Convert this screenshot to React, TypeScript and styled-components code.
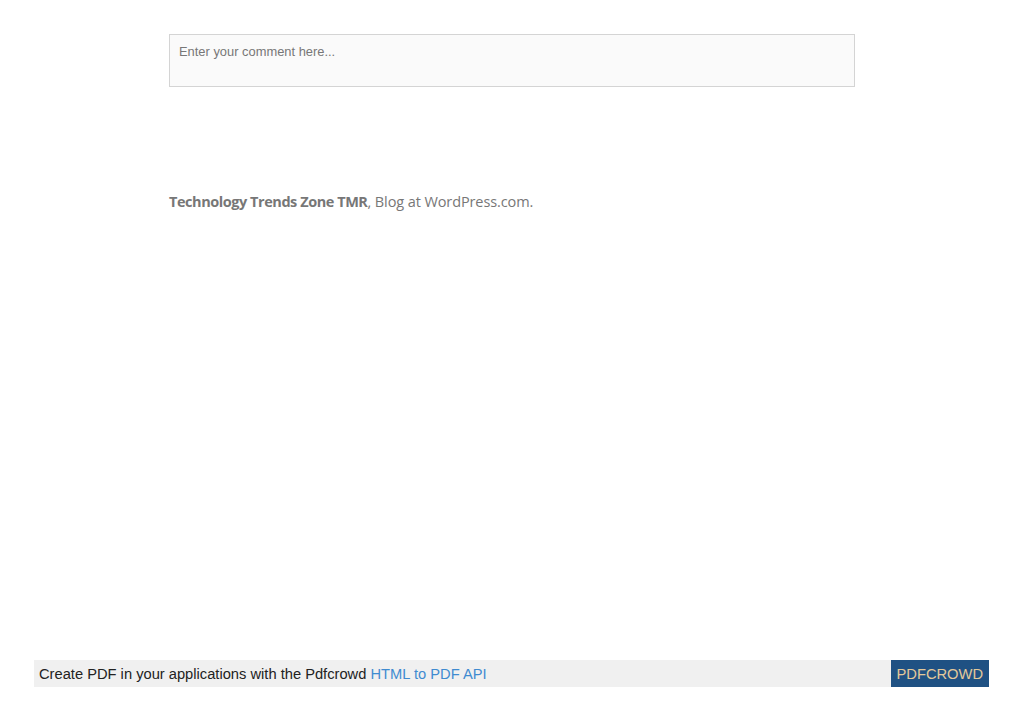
import React from 'react';
import styled, { createGlobalStyle } from 'styled-components';

const GlobalStyle = createGlobalStyle`
  html, body {
    margin: 0;
    padding: 0;
    background: #fff;
  }
`;

const Page = styled('div')`
  display: flex;
  flex-direction: column;
  height: 724px;
  box-sizing: border-box;
`;

const Content = styled('main')`
  width: 685px;
  margin: 0 0 0 169px;
  padding-top: 34px;
`;

const CommentBox = styled('textarea')`
  display: block;
  box-sizing: border-box;
  width: 686px;
  height: 53px;
  margin: 0;
  padding: 9px 9px;
  border: 1px solid #d4d4d4;
  background: #fafafa;
  resize: none;
  font-family: "Liberation Sans", Arial, sans-serif;
  font-size: 12.9px;
  line-height: 16px;
  color: #777;
  &::placeholder {
    color: #777;
  }
`;

const SiteInfo = styled('footer')`
  margin-top: 103px;
  font-family: "Open Sans", "Noto Sans", sans-serif;
  font-size: 14.5px;
  line-height: 24px;
  color: #777;
  letter-spacing: -0.1px;
  a {
    color: #777;
    text-decoration: none;
  }
  strong {
    font-weight: 700;
    letter-spacing: -0.45px;
  }
`;

const PdfBar = styled('div')`
  margin: auto 34px 37px 34px;
  height: 27px;
  display: flex;
  align-items: center;
  justify-content: space-between;
  background: #f0f0f0;
  font-family: "Liberation Sans", Arial, sans-serif;
  font-size: 14.7px;
`;

const PdfText = styled('span')`
  padding-left: 5px;
  color: #222;
  a {
    color: #3f8bd0;
    text-decoration: none;
  }
`;

const PdfButton = styled('a')`
  height: 100%;
  display: flex;
  align-items: center;
  padding: 0 6px;
  background: #1f5183;
  color: #e3c99a;
  text-decoration: none;
`;

export default function App() {
  return (
    <Page>
      <GlobalStyle />
      <Content>
        <CommentBox placeholder="Enter your comment here..." />
        <SiteInfo>
          <a href="#"><strong>Technology Trends Zone TMR</strong></a>, <a href="#">Blog at WordPress.com.</a>
        </SiteInfo>
      </Content>
      <PdfBar>
        <PdfText>
          Create PDF in your applications with the Pdfcrowd <a href="#">HTML to PDF API</a>
        </PdfText>
        <PdfButton href="#">PDFCROWD</PdfButton>
      </PdfBar>
    </Page>
  );
}
